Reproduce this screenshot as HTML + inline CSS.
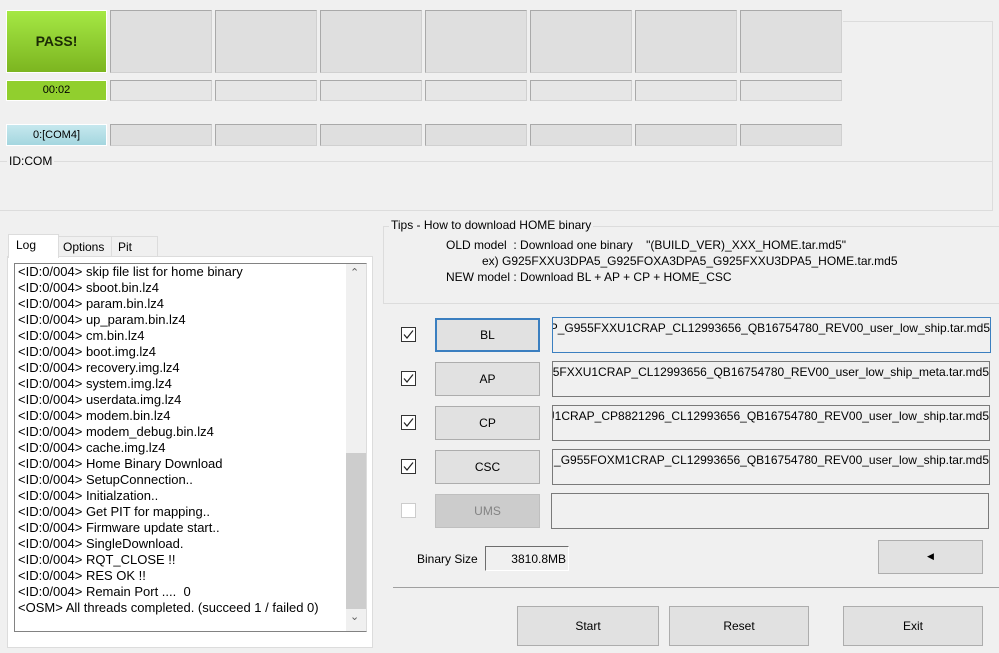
<!DOCTYPE html>
<html><head><style>
body{margin:0;width:999px;height:653px;background:#f0f0f0;position:relative;overflow:hidden;font-family:"Liberation Sans",sans-serif;font-size:12px;color:#000}
.a{position:absolute;box-sizing:border-box}
.cell{background:#dfdfdf;border:1px solid #a9a9a9;border-right-color:#d0d0d0;border-bottom-color:#d0d0d0}
.sm{background:#e6e6e6}
.btn{background:#e1e1e1;border:1px solid #adadad;text-align:center;font-size:12px}
.tb{background:#f0f0f0;border:1px solid #7a7a7a;padding:3px 0 0 4px;white-space:nowrap;overflow:hidden;direction:rtl;font-size:12px}
.cb{width:15px;height:15px;border:1px solid #333;background:#fff}
.cb svg{display:block}
.log div{height:16px;line-height:16px;white-space:nowrap}
</style></head><body>
<div class="a" style="left:6px;top:10px;width:101px;height:63px;background:linear-gradient(#a5e844,#7cb520);border:1px solid #fff;font-weight:bold;font-size:14px;text-align:center;line-height:61px;color:#1b2a05">PASS!</div>
<div class="a" style="left:6px;top:80px;width:101px;height:21px;background:#91cf2e;border:1px solid #fff;font-size:11px;text-align:center;line-height:19px">00:02</div>
<div class="a" style="left:6px;top:124px;width:101px;height:22px;background:linear-gradient(#c6e8ee,#a4d6df);border:1px solid #fff;font-size:11px;text-align:center;line-height:20px">0:[COM4]</div>
<div class="a cell" style="left:110px;top:10px;width:102px;height:63px"></div>
<div class="a cell" style="left:215px;top:10px;width:102px;height:63px"></div>
<div class="a cell" style="left:320px;top:10px;width:102px;height:63px"></div>
<div class="a cell" style="left:425px;top:10px;width:102px;height:63px"></div>
<div class="a cell" style="left:530px;top:10px;width:102px;height:63px"></div>
<div class="a cell" style="left:635px;top:10px;width:102px;height:63px"></div>
<div class="a cell" style="left:740px;top:10px;width:102px;height:63px"></div>
<div class="a cell sm" style="left:110px;top:80px;width:102px;height:21px"></div>
<div class="a cell sm" style="left:215px;top:80px;width:102px;height:21px"></div>
<div class="a cell sm" style="left:320px;top:80px;width:102px;height:21px"></div>
<div class="a cell sm" style="left:425px;top:80px;width:102px;height:21px"></div>
<div class="a cell sm" style="left:530px;top:80px;width:102px;height:21px"></div>
<div class="a cell sm" style="left:635px;top:80px;width:102px;height:21px"></div>
<div class="a cell sm" style="left:740px;top:80px;width:102px;height:21px"></div>
<div class="a cell" style="left:110px;top:124px;width:102px;height:22px"></div>
<div class="a cell" style="left:215px;top:124px;width:102px;height:22px"></div>
<div class="a cell" style="left:320px;top:124px;width:102px;height:22px"></div>
<div class="a cell" style="left:425px;top:124px;width:102px;height:22px"></div>
<div class="a cell" style="left:530px;top:124px;width:102px;height:22px"></div>
<div class="a cell" style="left:635px;top:124px;width:102px;height:22px"></div>
<div class="a cell" style="left:740px;top:124px;width:102px;height:22px"></div>
<div class="a" style="left:843px;top:21px;width:150px;height:141px;border:1px solid #dcdcdc;border-left:none;border-bottom:none"></div>
<div class="a" style="left:0;top:161px;width:993px;height:50px;border:1px solid #dcdcdc;border-left:none"></div>
<div class="a" style="left:7px;top:154px;background:#f0f0f0;padding:0 2px">ID:COM</div>
<div class="a" style="left:7px;top:256px;width:366px;height:392px;background:#fff;border:1px solid #dcdcdc"></div>
<div class="a" style="left:8px;top:234px;width:51px;height:24px;background:#fff;border:1px solid #dcdcdc;border-bottom:none;padding:3px 0 0 7px">Log</div>
<div class="a" style="left:58px;top:236px;width:54px;height:20px;border:1px solid #dcdcdc;border-bottom:none;padding:3px 0 0 4px">Options</div>
<div class="a" style="left:111px;top:236px;width:47px;height:20px;border:1px solid #dcdcdc;border-bottom:none;padding:3px 0 0 6px">Pit</div>
<div class="a log" style="left:14px;top:263px;width:353px;height:369px;background:#fff;border:1px solid #828282;border-right:1px solid #dcdcdc;padding:0 0 0 3px;font-size:13px">
<div>&lt;ID:0/004&gt; skip file list for home binary</div><div>&lt;ID:0/004&gt; sboot.bin.lz4</div><div>&lt;ID:0/004&gt; param.bin.lz4</div><div>&lt;ID:0/004&gt; up_param.bin.lz4</div><div>&lt;ID:0/004&gt; cm.bin.lz4</div><div>&lt;ID:0/004&gt; boot.img.lz4</div><div>&lt;ID:0/004&gt; recovery.img.lz4</div><div>&lt;ID:0/004&gt; system.img.lz4</div><div>&lt;ID:0/004&gt; userdata.img.lz4</div><div>&lt;ID:0/004&gt; modem.bin.lz4</div><div>&lt;ID:0/004&gt; modem_debug.bin.lz4</div><div>&lt;ID:0/004&gt; cache.img.lz4</div><div>&lt;ID:0/004&gt; Home Binary Download</div><div>&lt;ID:0/004&gt; SetupConnection..</div><div>&lt;ID:0/004&gt; Initialzation..</div><div>&lt;ID:0/004&gt; Get PIT for mapping..</div><div>&lt;ID:0/004&gt; Firmware update start..</div><div>&lt;ID:0/004&gt; SingleDownload.</div><div>&lt;ID:0/004&gt; RQT_CLOSE !!</div><div>&lt;ID:0/004&gt; RES OK !!</div><div>&lt;ID:0/004&gt; Remain Port ....&nbsp; 0</div><div>&lt;OSM&gt; All threads completed. (succeed 1 / failed 0)</div>
</div>
<div class="a" style="left:346px;top:264px;width:20px;height:367px;background:#f0f0f0"></div>
<div class="a" style="left:346px;top:453px;width:20px;height:156px;background:#cdcdcd"></div>
<div class="a" style="left:350px;top:266px;font-size:11px;color:#606060">&#8963;</div>
<div class="a" style="left:350px;top:610px;font-size:11px;color:#606060">&#8964;</div>
<div class="a" style="left:383px;top:226px;width:616px;height:78px;border:1px solid #dcdcdc;border-right:none"></div>
<div class="a" style="left:389px;top:218px;background:#f0f0f0;padding:0 2px">Tips - How to download HOME binary</div>
<div class="a" style="left:446px;top:238px;white-space:pre">OLD model  : Download one binary    "(BUILD_VER)_XXX_HOME.tar.md5"</div>
<div class="a" style="left:482px;top:254px">ex) G925FXXU3DPA5_G925FOXA3DPA5_G925FXXU3DPA5_HOME.tar.md5</div>
<div class="a" style="left:446px;top:270px">NEW model : Download BL + AP + CP + HOME_CSC</div>
<div class="a cb" style="left:401px;top:327px"><svg width="13" height="13"><path d="M2 6.5L5 10L11 2.5" fill="none" stroke="#222" stroke-width="1.2"/></svg></div>
<div class="a btn" style="left:435px;top:318px;width:105px;height:34px;border:2px solid #3b7fc0;line-height:30px">BL</div>
<div class="a tb" style="left:552px;top:317px;width:439px;height:36px;border-color:#3b7fc0"><span dir="ltr">AP_G955FXXU1CRAP_CL12993656_QB16754780_REV00_user_low_ship.tar.md5</span></div>
<div class="a cb" style="left:401px;top:371px"><svg width="13" height="13"><path d="M2 6.5L5 10L11 2.5" fill="none" stroke="#222" stroke-width="1.2"/></svg></div>
<div class="a btn" style="left:435px;top:362px;width:105px;height:34px;line-height:32px">AP</div>
<div class="a tb" style="left:552px;top:361px;width:438px;height:36px"><span dir="ltr">AP_G955FXXU1CRAP_CL12993656_QB16754780_REV00_user_low_ship_meta.tar.md5</span></div>
<div class="a cb" style="left:401px;top:415px"><svg width="13" height="13"><path d="M2 6.5L5 10L11 2.5" fill="none" stroke="#222" stroke-width="1.2"/></svg></div>
<div class="a btn" style="left:435px;top:406px;width:105px;height:34px;line-height:32px">CP</div>
<div class="a tb" style="left:552px;top:405px;width:438px;height:36px"><span dir="ltr">CP_G955FXXU1CRAP_CP8821296_CL12993656_QB16754780_REV00_user_low_ship.tar.md5</span></div>
<div class="a cb" style="left:401px;top:459px"><svg width="13" height="13"><path d="M2 6.5L5 10L11 2.5" fill="none" stroke="#222" stroke-width="1.2"/></svg></div>
<div class="a btn" style="left:435px;top:450px;width:105px;height:34px;line-height:32px">CSC</div>
<div class="a tb" style="left:552px;top:449px;width:438px;height:36px"><span dir="ltr">HOME_CSC_OXM_G955FOXM1CRAP_CL12993656_QB16754780_REV00_user_low_ship.tar.md5</span></div>
<div class="a cb" style="left:401px;top:503px;border-color:#ccc"></div>
<div class="a btn" style="left:435px;top:494px;width:105px;height:34px;line-height:32px;background:#cccccc;border-color:#bfbfbf;color:#838383">UMS</div>
<div class="a tb" style="left:551px;top:493px;width:438px;height:36px"></div>
<div class="a" style="left:417px;top:552px">Binary Size</div>
<div class="a" style="left:485px;top:546px;width:84px;height:25px;border:1px solid #6d6d6d;border-right-color:#fff;border-bottom-color:#fff;text-align:right;padding:5px 2px 0 0">3810.8MB</div>
<div class="a btn" style="left:878px;top:540px;width:105px;height:34px;line-height:31px;font-size:9px">&#9664;</div>
<div class="a" style="left:393px;top:587px;width:606px;height:1px;background:#a0a0a0"></div>
<div class="a btn" style="left:517px;top:606px;width:142px;height:40px;line-height:38px">Start</div>
<div class="a btn" style="left:669px;top:606px;width:140px;height:40px;line-height:38px">Reset</div>
<div class="a btn" style="left:843px;top:606px;width:140px;height:40px;line-height:38px">Exit</div>
</body></html>
